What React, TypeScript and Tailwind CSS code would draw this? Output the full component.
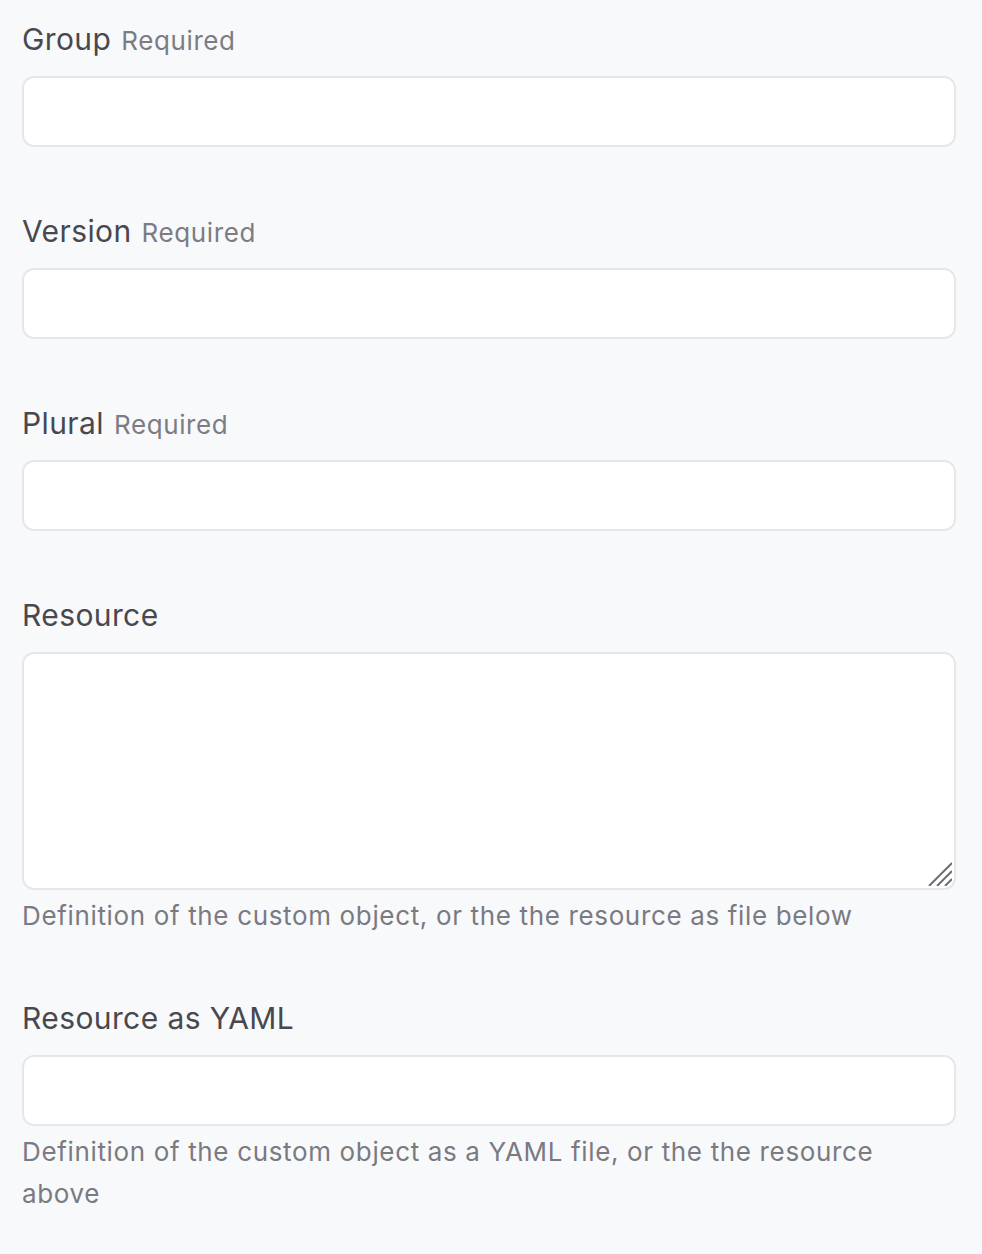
import React from 'react';

const font = { fontFamily: 'Inter, "Liberation Sans", Arial, sans-serif' };

interface FieldProps {
  label: string;
  required?: boolean;
  help?: string;
  multiline?: boolean;
}

const Field: React.FC<FieldProps> = ({ label, required, help, multiline }) => {
  return (
    <div className={help ? 'mb-[63px]' : 'mb-[66px]'}>
      <label className="flex items-baseline gap-[10px] h-[38px] mb-[17px] leading-[36px]">
        <span className="text-[30px] tracking-[0.4px] text-[#48484e]">{label}</span>
        {required && <span className="text-[26px] tracking-[0.6px] text-[#7c7c84]">Required</span>}
      </label>
      {multiline ? (
        <div className="relative">
          <textarea className="block w-full h-[238px] rounded-[12px] border-2 border-[#e6e7eb] bg-white outline-none resize-none" />
          {/* resize grip */}
          <svg className="absolute right-[4px] bottom-[4px]" width="24" height="24" viewBox="0 0 24 24">
            <g stroke="#6e6e6e" strokeWidth="2" strokeLinecap="butt">
              <line x1="24" y1="1" x2="1" y2="24" />
              <line x1="24" y1="9" x2="9" y2="24" />
              <line x1="24" y1="17" x2="17" y2="24" />
            </g>
          </svg>
        </div>
      ) : (
        <input type="text" className="block w-full h-[71px] rounded-[12px] border-2 border-[#e6e7eb] bg-white outline-none px-4" />
      )}
      {help && <p className="mt-[5px] text-[26px] tracking-[0.65px] leading-[42px] text-[#7a7a82]">{help}</p>}
    </div>
  );
};

export default function App() {
  return (
    <div className="min-h-[1254px] bg-[#f8f9fb] pl-[22px] pr-[26px] pt-[21px]" style={font}>
      <Field label="Group" required />
      <Field label="Version" required />
      <Field label="Plural" required />
      <Field label="Resource" multiline help="Definition of the custom object, or the the resource as file below" />
      <Field label="Resource as YAML" help="Definition of the custom object as a YAML file, or the the resource above" />
    </div>
  );
}
